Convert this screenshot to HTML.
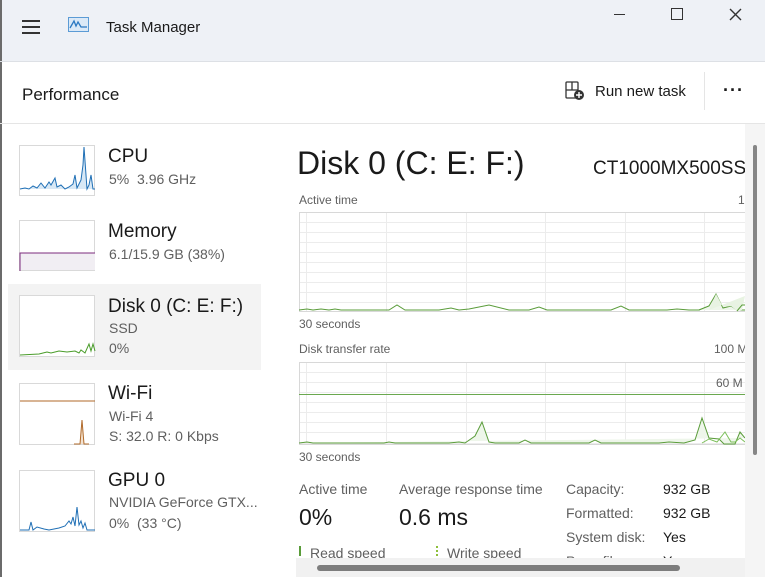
<!DOCTYPE html>
<html><head><meta charset="utf-8"><style>
*{margin:0;padding:0;box-sizing:border-box}
body{width:765px;height:577px;overflow:hidden;background:#fff;font-family:"Liberation Sans",sans-serif;color:#1a1a1a;position:relative}
.a{position:absolute;white-space:nowrap}
.g{color:#5f5f5f}
</style></head><body>
<div class="a" style="left:0;top:0;width:765px;height:61px;background:#eef1f6"></div>
<div class="a" style="left:0;top:0;width:2px;height:577px;background:#6b6b6b"></div>
<div class="a" style="left:0;top:61px;width:765px;height:1px;background:#dde0e5"></div>
<div class="a" style="left:22px;top:20px;width:18px;height:2px;background:#333"></div>
<div class="a" style="left:22px;top:26px;width:18px;height:2px;background:#333"></div>
<div class="a" style="left:22px;top:32px;width:18px;height:2px;background:#333"></div>
<svg class="a" style="left:68px;top:17px" width="22" height="16"><rect x="0.5" y="0.5" width="20" height="14" fill="#dbe9f7" stroke="#5b9bd5"/><path d="M2 11 L6 4 L8 9 L10 5 L13 10 L19 10" stroke="#2b79c2" fill="none" stroke-width="1.3"/></svg>
<div class="a" style="left:106px;top:19px;font-size:15px">Task Manager</div>
<div class="a" style="left:614px;top:14px;width:11px;height:1px;background:#333"></div>
<div class="a" style="left:671px;top:8px;width:12px;height:12px;border:1.5px solid #333"></div>
<svg class="a" style="left:729px;top:8px" width="13" height="13"><path d="M1 1L12 12M12 1L1 12" stroke="#333" stroke-width="1.4"/></svg>
<div class="a" style="left:22px;top:85px;font-size:17px">Performance</div>
<svg class="a" style="left:565px;top:81px" width="22" height="22"><rect x="1" y="1" width="12" height="16" rx="1" fill="none" stroke="#333" stroke-width="1.3"/><path d="M1 9H13M7 1V9" stroke="#333" stroke-width="1.3"/><circle cx="14" cy="14" r="5" fill="#333"/><path d="M14 11V17M11 14H17" stroke="#fff" stroke-width="1.4"/></svg>
<div class="a" style="left:595px;top:83px;font-size:15px">Run new task</div>
<div class="a" style="left:704px;top:72px;width:1px;height:38px;background:#e5e5e5"></div>
<div class="a" style="left:723px;top:80px;font-size:18px;font-weight:bold;letter-spacing:1px">···</div>
<div class="a" style="left:0;top:123px;width:765px;height:1px;background:#e5e5e5"></div>
<div class="a" style="left:8px;top:284px;width:253px;height:86px;background:#f3f3f3"></div>
<svg class="a" style="left:19px;top:145px" width="78" height="392">
<rect x="0.5" y="0.5" width="75" height="50" fill="#fff" stroke="#d9d9d9"/>
<path d="M1 44 L6 43 10 44 14 41 18 43 22 38 26 43 30 37 32 40 36 33 38 42 42 40 46 44 50 42 54 39 56 30 58 43 62 35 64 20 65 2 67 30 68 44 70 40 72 30 74 44 76 44" stroke="#1f6fb5" fill="#d8e8f5" stroke-width="1"/>
<rect x="0.5" y="75.5" width="75" height="50" fill="#fff" stroke="#d9d9d9"/>
<rect x="1" y="108" width="75" height="17" fill="#f1eef3"/>
<path d="M1 126 V108 H76" stroke="#7c2b7c" fill="none"/>
<rect x="0.5" y="150.5" width="75" height="61" fill="#fff" stroke="#d9d9d9"/>
<path d="M1 210 L20 209 28 207 32 208 40 206 48 207 56 206 60 208 62 205 66 208 70 199 72 206 74 199 76 206" stroke="#4a9c2a" fill="none"/>
<rect x="0.5" y="238.5" width="75" height="61" fill="#fff" stroke="#d9d9d9"/>
<path d="M1 256 H76" stroke="#b06a2a"/>
<path d="M55 299 L61 299 63 275 65 299 L70 299" stroke="#b06a2a" fill="#f2e1cf"/>
<rect x="0.5" y="325.5" width="75" height="61" fill="#fff" stroke="#d9d9d9"/>
<path d="M1 385 L10 385 12 377 14 385 18 382 25 384 30 385 40 383 46 381 50 376 52 379 54 372 56 381 58 362 60 380 62 376 64 383 66 378 68 385 76 385" stroke="#1f6fb5" fill="none"/>
</svg>
<div class="a" style="left:108px;top:146px;font-size:19px">CPU</div>
<div class="a g" style="left:109px;top:171px;font-size:14px">5%&nbsp; 3.96 GHz</div>
<div class="a" style="left:108px;top:221px;font-size:19px">Memory</div>
<div class="a g" style="left:109px;top:246px;font-size:14px">6.1/15.9 GB (38%)</div>
<div class="a" style="left:108px;top:296px;font-size:19px">Disk 0 (C: E: F:)</div>
<div class="a g" style="left:109px;top:320px;font-size:14px">SSD</div>
<div class="a g" style="left:109px;top:340px;font-size:14px">0%</div>
<div class="a" style="left:108px;top:383px;font-size:19px">Wi-Fi</div>
<div class="a g" style="left:109px;top:408px;font-size:14px">Wi-Fi 4</div>
<div class="a g" style="left:109px;top:428px;font-size:14px">S: 32.0 R: 0 Kbps</div>
<div class="a" style="left:108px;top:470px;font-size:19px">GPU 0</div>
<div class="a g" style="left:109px;top:494px;font-size:14px">NVIDIA GeForce GTX...</div>
<div class="a g" style="left:109px;top:515px;font-size:14px">0%&nbsp; (33 °C)</div>
<div class="a" style="left:297px;top:145px;font-size:32px">Disk 0 (C: E: F:)</div>
<div class="a" style="left:593px;top:158px;font-size:19px">CT1000MX500SS</div>
<div class="a g" style="left:299px;top:193px;font-size:12px">Active time</div>
<div class="a g" style="left:738px;top:193px;font-size:12px">1</div>
<svg class="a" style="left:299px;top:212px" width="446" height="235">
<g stroke="#ececec">
<path d="M0 10.5H446M0 20.5H446M0 30.5H446M0 40.5H446M0 50.5H446M0 60.5H446M0 70.5H446M0 80.5H446M0 90.5H446"/>
<path d="M7.5 0V100M87.5 0V100M167.5 0V100M246.5 0V100M326.5 0V100M405.5 0V100"/>
<path d="M0 160.5H446M0 170.5H446M0 180.5H446M0 190.5H446M0 200.5H446M0 210.5H446M0 220.5H446M0 231.5H446"/>
<path d="M7.5 150V232M87.5 150V232M167.5 150V232M246.5 150V232M326.5 150V232M405.5 150V232"/>
</g>
<rect x="0.5" y="0.5" width="446" height="99" fill="none" stroke="#d8d8d8"/>
<rect x="0.5" y="150.5" width="446" height="82" fill="none" stroke="#d8d8d8"/>
<path d="M0 98 L8 97 14 98 22 97 30 98 36 97 42 98 60 98 80 98 90 98 98 93 106 98 130 98 140 98 152 96 160 98 170 97 190 93 210 98 230 98 240 95 248 98 262 98 282 98 300 98 312 98 322 94 330 98 350 98 368 98 378 97 390 98 400 98 410 94 416 88 424 96 432 95 440 98 444 98 446 98" stroke="#5a9c3a" fill="none"/>
<path d="M390 98 L400 98 410 94 417 82 424 96 432 94 438 98 442 98 446 98 446 98" stroke="#5a9c3a" fill="#eef6ea"/>
<path d="M410 98 L417 82 424 95 432 94 438 99 443 98 446 84 Z" fill="#e8f3e2"/>
<path d="M438 99 L443 93 446 93" stroke="#5a9c3a" fill="none"/>
<line x1="0" y1="182.5" x2="446" y2="182.5" stroke="#6aa84f"/>
<path d="M0 231 L8 230 14 231 85 231 90 230 96 231 150 231 160 230 166 231 176 224 183 210 190 230 196 231 220 231 226 228 232 231 290 231 296 228 302 231 360 231 370 230 385 231 396 228 403 206 410 226 420 227 425 232 436 232 441 220 446 226" stroke="#5a9c3a" fill="#eef6ea"/>
<path d="M403 231 L410 227 418 230 426 220 432 230 436 230 441 226 446 230" stroke="#7cbf5a" fill="none"/>
</svg>
<div class="a g" style="left:299px;top:317px;font-size:12px">30 seconds</div>
<div class="a g" style="left:299px;top:342px;font-size:12px">Disk transfer rate</div>
<div class="a g" style="left:714px;top:342px;font-size:12px">100 M</div>
<div class="a g" style="left:716px;top:376px;font-size:12px">60 M</div>
<div class="a g" style="left:299px;top:450px;font-size:12px">30 seconds</div>
<div class="a g" style="left:299px;top:481px;font-size:14px">Active time</div>
<div class="a" style="left:299px;top:504px;font-size:23px">0%</div>
<div class="a g" style="left:399px;top:481px;font-size:14px">Average response time</div>
<div class="a" style="left:399px;top:504px;font-size:23px">0.6 ms</div>
<div class="a g" style="left:566px;top:481px;font-size:14px">Capacity:</div>
<div class="a" style="left:663px;top:481px;font-size:14px">932 GB</div>
<div class="a g" style="left:566px;top:505px;font-size:14px">Formatted:</div>
<div class="a" style="left:663px;top:505px;font-size:14px">932 GB</div>
<div class="a g" style="left:566px;top:529px;font-size:14px">System disk:</div>
<div class="a" style="left:663px;top:529px;font-size:14px">Yes</div>
<div class="a g" style="left:566px;top:553px;font-size:14px">Page file:</div>
<div class="a" style="left:663px;top:553px;font-size:14px">Yes</div>
<div class="a" style="left:299px;top:546px;width:2px;height:10px;background:#5a9c3a"></div>
<div class="a g" style="left:310px;top:545px;font-size:14px">Read speed</div>
<div class="a" style="left:436px;top:546px;width:2px;height:10px;border-left:2px dotted #8dbf3a"></div>
<div class="a g" style="left:447px;top:545px;font-size:14px">Write speed</div>
<div class="a" style="left:745px;top:124px;width:20px;height:453px;background:#f5f5f5"></div>
<div class="a" style="left:753px;top:145px;width:4px;height:310px;background:#868686;border-radius:2px"></div>
<div class="a" style="left:296px;top:558px;width:449px;height:19px;background:#f1f1f1"></div>
<div class="a" style="left:317px;top:565px;width:363px;height:6px;background:#7d7d7d;border-radius:3px"></div>
</body></html>
